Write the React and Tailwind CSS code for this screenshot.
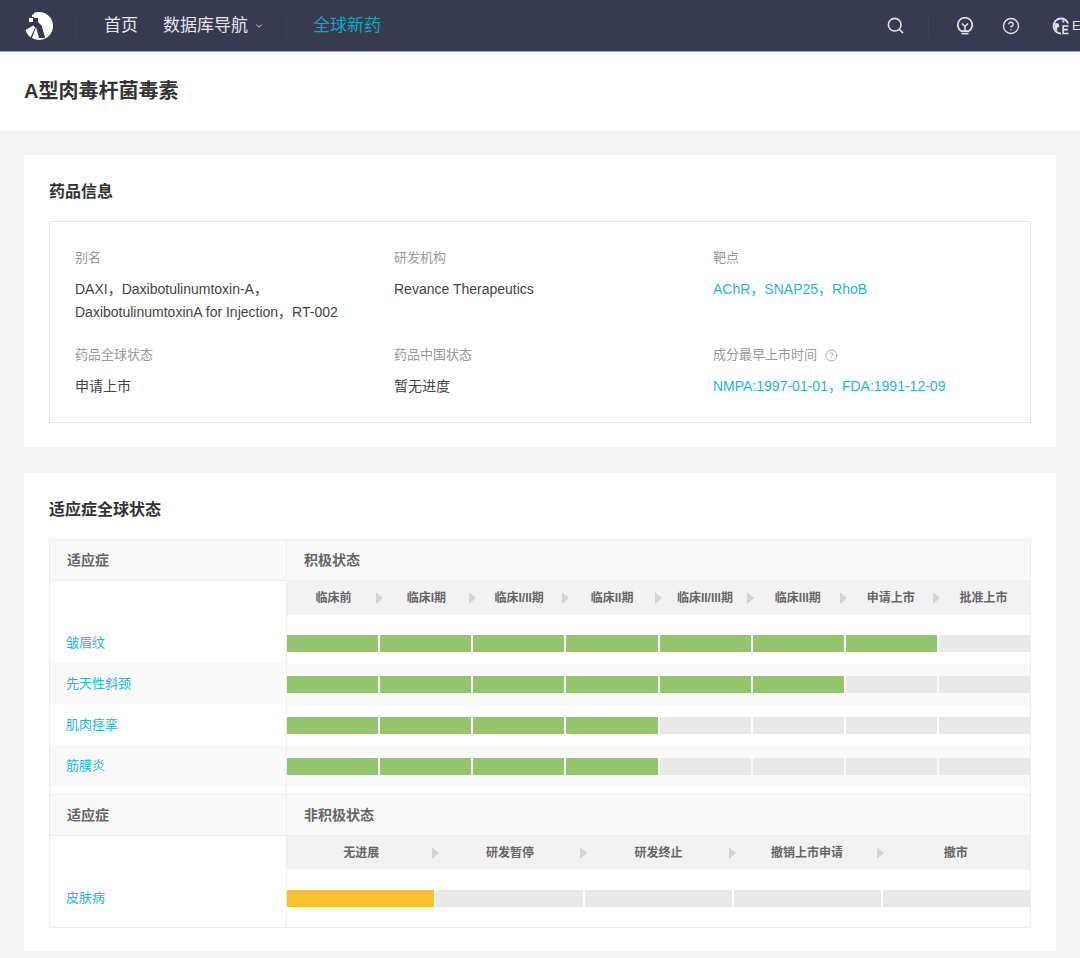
import { ChevronDown, Search, CircleHelp } from 'lucide-react'

const font = { cjk: "font-['Liberation_Sans','Noto_Sans_CJK_SC',sans-serif]" }

const activeStages = ['临床前', '临床I期', '临床I/II期', '临床II期', '临床II/III期', '临床III期', '申请上市', '批准上市']
const inactiveStages = ['无进展', '研发暂停', '研发终止', '撤销上市申请', '撤市']

const activeRows = [
  { name: '皱眉纹', filled: 7 },
  { name: '先天性斜颈', filled: 6 },
  { name: '肌肉痉挛', filled: 4 },
  { name: '筋膜炎', filled: 4 },
]

function Logo() {
  return (
    <svg width="30" height="30" viewBox="0 0 30 30" className="shrink-0">
      <path d="M11 1.5A14 14 0 1 1 8 27L12 16 15 27 21 27 17 14 14 11 14 7 10 7 10 2Z" fill="#fff" />
      <path d="M1.5 19L9.5 14.5 11 16.5 6.5 26.5A14 14 0 0 1 1.5 19Z" fill="#fff" />
      <rect x="5" y="7" width="4" height="4" fill="#fff" />
      <rect x="8" y="3.5" width="2.5" height="2.5" fill="#fff" />
      <path d="M17 15L20 26" stroke="#373a50" strokeWidth="1.5" />
    </svg>
  )
}

function BulbIcon() {
  return (
    <svg width="18" height="18" viewBox="0 0 18 18" fill="none" stroke="#e4e4e8" strokeWidth="1.7">
      <path d="M5.5 14.2A7.2 7.2 0 1 1 12.5 14.2Z" />
      <path d="M6 6.5L9 9.5 12 6.5M9 9.5V14" strokeWidth="1.5" />
      <path d="M5.5 16.6H12.5" />
    </svg>
  )
}

function GlobeIcon() {
  return (
    <svg width="18" height="18" viewBox="0 0 18 18" fill="none">
      <path d="M9 1.5A7.5 7.5 0 1 0 9 16.5" stroke="#e4e4e8" strokeWidth="1.8" />
      <path d="M9 1.5A7.5 7.5 0 0 1 16 6.5" stroke="#e4e4e8" strokeWidth="1.8" />
      <path d="M2.5 6L6.5 6.5 7.5 9.5 5 11 5.5 14.5 3 12Z" fill="#e4e4e8" />
      <path d="M10 3L13 4 11 6Z" fill="#e4e4e8" />
      <path d="M16.5 9H11.2V16.5H16.5M11.2 12.7H15.8" stroke="#e4e4e8" strokeWidth="1.7" />
    </svg>
  )
}

function Header() {
  return (
    <div className="h-[52px] bg-[#373a50] border-b border-[#a9a9bd] flex items-center overflow-hidden shrink-0">
      <div className="w-[77px] pl-[24px] pr-[23px] h-[30px] border-r-0 flex items-center">
        <Logo />
      </div>
      <div className="w-px h-[22px] bg-[#3f4259] -ml-[1px]" />
      <span className="ml-[27px] text-[17px] text-[#e6e6ea]">首页</span>
      <span className="ml-[25px] text-[17px] text-[#e6e6ea]">数据库导航</span>
      <ChevronDown size={10} strokeWidth={2} className="ml-[6px] text-[#e6e6ea]" />
      <div className="w-px h-[22px] bg-[#3f4259] ml-[22px]" />
      <span className="ml-[26px] text-[17px] text-[#19a3bf]">全球新药</span>
      <div className="flex-1" />
      <Search size={19} strokeWidth={2} className="text-[#e4e4e8] shrink-0" />
      <div className="w-px h-[22px] bg-[#3f4259] ml-[23px] shrink-0" />
      <div className="ml-[27px] shrink-0"><BulbIcon /></div>
      <div className="ml-[28px] shrink-0"><CircleHelp size={18} strokeWidth={1.8} className="text-[#e4e4e8]" /></div>
      <div className="ml-[32px] mr-[-10px] flex items-center gap-[2px] shrink-0">
        <GlobeIcon />
        <span className="text-[13px] text-[#e4e4e8]">EN</span>
      </div>
    </div>
  )
}

function InfoCell({ label, help, children, className }) {
  return (
    <div className={className}>
      <div className="flex items-center text-[13px] leading-[20px] text-[#999]">
        {label}
        {help && <CircleHelp size={13} strokeWidth={1.5} className="ml-[8px] text-[#999]" />}
      </div>
      <div className="mt-[10px] text-[14px] leading-[23px] text-[#444]">{children}</div>
    </div>
  )
}

function StageHead({ stages }) {
  return (
    <div className="h-[34px] bg-[#f2f2f2] flex">
      {stages.map((s, i) => (
        <div key={s} className="flex-1 relative flex items-center justify-center text-[12px] font-bold text-[#666]">
          {s}
          {i < stages.length - 1 && (
            <span className="absolute right-[-3px] top-[11px] w-0 h-0 border-y-[6px] border-y-transparent border-l-[7px] border-l-[#d4d4d4]" />
          )}
        </div>
      ))}
    </div>
  )
}

function Bars({ count, filled, color }) {
  return (
    <div className="flex gap-[2px] h-[17px]">
      {Array.from({ length: count }).map((_, i) => (
        <div key={i} className={`flex-1 ${i < filled ? color : 'bg-[#e9e9e9]'}`} />
      ))}
    </div>
  )
}

function SectionHead({ title }) {
  return (
    <div className="flex h-[41px] bg-[#f9f9f9] border-b border-[#eeeeee] text-[14px] font-bold text-[#666]">
      <div className="w-[237px] pl-[17px] flex items-center border-r border-[#eeeeee]">适应症</div>
      <div className="flex-1 pl-[17px] flex items-center">{title}</div>
    </div>
  )
}

export default function App() {
  return (
    <div className={`w-[1080px] h-[958px] overflow-hidden bg-[#f4f4f4] flex flex-col ${font.cjk}`}>
      <Header />
      <div className="h-[78px] bg-white flex items-center pl-[24px] text-[20px] font-bold text-[#333] shrink-0">
        A型肉毒杆菌毒素
      </div>

      <div className="px-[24px] pt-[25px] flex flex-col gap-[26px]">
        <div className="bg-white h-[292px] px-[25px] pt-[26px]">
          <h2 className="text-[16px] leading-[22px] font-bold text-[#333]">药品信息</h2>
          <div className="mt-[18px] h-[202px] border border-[#e8e8e8] pl-[25px] pt-[26px]">
            <div className="grid grid-cols-[319px_319px_1fr]">
              <InfoCell label="别名">
                DAXI，Daxibotulinumtoxin-A，<br />DaxibotulinumtoxinA for Injection，RT-002
              </InfoCell>
              <InfoCell label="研发机构">Revance Therapeutics</InfoCell>
              <InfoCell label="靶点">
                <span className="text-[#1fb6cf]">AChR，SNAP25，RhoB</span>
              </InfoCell>
              <InfoCell label="药品全球状态" className="mt-[21px]">申请上市</InfoCell>
              <InfoCell label="药品中国状态" className="mt-[21px]">暂无进度</InfoCell>
              <InfoCell label="成分最早上市时间" help className="mt-[21px]">
                <span className="text-[#1fb6cf]">NMPA:1997-01-01，FDA:1991-12-09</span>
              </InfoCell>
            </div>
          </div>
        </div>

        <div className="bg-white h-[478px] px-[25px] pt-[26px]">
          <h2 className="text-[16px] leading-[22px] font-bold text-[#333]">适应症全球状态</h2>
          <div className="mt-[18px] h-[389px] border border-[#eeeeee]">
            <SectionHead title="积极状态" />
            <div className="flex h-[214px] border-b border-[#eeeeee]">
              <div className="w-[237px] border-r border-[#eeeeee] pt-[41px]">
                {activeRows.map((r, i) => (
                  <div key={r.name} className={`h-[41px] flex items-center pl-[16px] text-[13px] text-[#1fb6cf] ${i % 2 === 1 ? 'bg-[#f9f9f9]' : ''}`}>
                    {r.name}
                  </div>
                ))}
              </div>
              <div className="flex-1">
                <StageHead stages={activeStages} />
                <div className="pt-[8px]">
                  {activeRows.map((r, i) => (
                    <div key={r.name} className={`h-[41px] flex flex-col justify-center ${i % 2 === 1 ? 'bg-[#f9f9f9]' : ''}`}>
                      <Bars count={8} filled={r.filled} color="bg-[#94c46c]" />
                    </div>
                  ))}
                </div>
              </div>
            </div>
            <SectionHead title="非积极状态" />
            <div className="flex h-[91px]">
              <div className="w-[237px] border-r border-[#eeeeee] pl-[16px] pt-[52px] text-[13px] leading-[20px] text-[#1fb6cf]">
                皮肤病
              </div>
              <div className="flex-1">
                <StageHead stages={inactiveStages} />
                <div className="pt-[20px]">
                  <Bars count={5} filled={1} color="bg-[#fcc02e]" />
                </div>
              </div>
            </div>
          </div>
        </div>
      </div>
    </div>
  )
}
